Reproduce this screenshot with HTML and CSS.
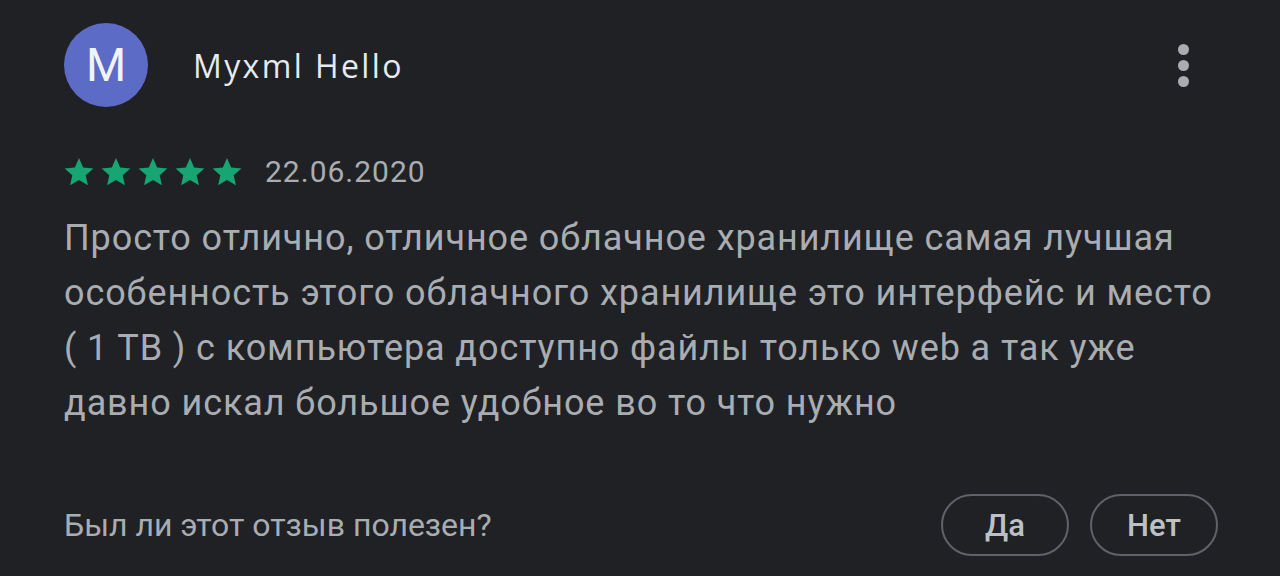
FILE: index.html
```html
<!DOCTYPE html>
<html lang="ru">
<head>
  <meta charset="UTF-8">
  <title>Отзыв</title>
  <link rel="stylesheet" href="styles.css">
</head>
<body>
  <div class="review">
    <div class="header">
      <div class="avatar">M</div>
      <div class="name">Myxml Hello</div>
      <div class="menu">
        <span class="dot"></span>
        <span class="dot"></span>
        <span class="dot"></span>
      </div>
    </div>

    <div class="meta">
      <div class="stars">
        <svg viewBox="0 0 24 24"><path d="M12 1.5l3.1 7.1 7.7.7-5.8 5.1 1.7 7.6L12 18l-6.7 4 1.7-7.6-5.8-5.1 7.7-.7z"/></svg>
        <svg viewBox="0 0 24 24"><path d="M12 1.5l3.1 7.1 7.7.7-5.8 5.1 1.7 7.6L12 18l-6.7 4 1.7-7.6-5.8-5.1 7.7-.7z"/></svg>
        <svg viewBox="0 0 24 24"><path d="M12 1.5l3.1 7.1 7.7.7-5.8 5.1 1.7 7.6L12 18l-6.7 4 1.7-7.6-5.8-5.1 7.7-.7z"/></svg>
        <svg viewBox="0 0 24 24"><path d="M12 1.5l3.1 7.1 7.7.7-5.8 5.1 1.7 7.6L12 18l-6.7 4 1.7-7.6-5.8-5.1 7.7-.7z"/></svg>
        <svg viewBox="0 0 24 24"><path d="M12 1.5l3.1 7.1 7.7.7-5.8 5.1 1.7 7.6L12 18l-6.7 4 1.7-7.6-5.8-5.1 7.7-.7z"/></svg>
      </div>
      <span class="date">22.06.2020</span>
    </div>

    <p class="text">Просто отлично, отличное облачное хранилище самая лучшая особенность этого облачного хранилище это интерфейс и место ( 1 ТВ ) с компьютера доступно файлы только web а так уже давно искал большое удобное во то что нужно</p>

    <div class="footer">
      <span class="question">Был ли этот отзыв полезен?</span>
      <div class="actions">
        <button class="pill">Да</button>
        <button class="pill">Нет</button>
      </div>
    </div>
  </div>
</body>
</html>
```

FILE: styles.css
```css
html, body {
  margin: 0;
  height: 100%;
}

body {
  background-color: #202124;
  font-family: Roboto, "Liberation Sans", sans-serif;
  color: #a9adb2;
}

.review {
  padding: 23px 62px 0 64px;
}

.header {
  display: flex;
  align-items: center;
}

.avatar {
  width: 84px;
  height: 84px;
  border-radius: 50%;
  background-color: #5c6bc6;
  color: #f1f3f4;
  font-size: 46px;
  display: flex;
  align-items: center;
  justify-content: center;
  flex-shrink: 0;
}

.name {
  margin-left: 45px;
  font-family: "Open Sans", Roboto, sans-serif;
  font-size: 32px;
  letter-spacing: 2.4px;
  color: #e8eaed;
  flex: 1;
}

.menu {
  display: flex;
  flex-direction: column;
  gap: 5px;
  margin-right: 29px;
}

.dot {
  width: 11px;
  height: 11px;
  border-radius: 50%;
  background-color: #a9acb0;
}

.meta {
  display: flex;
  align-items: center;
  margin-top: 47px;
}

.stars {
  display: flex;
  gap: 5px;
  margin-left: -1px;
}

.stars svg {
  width: 32px;
  height: 32px;
  fill: #17a673;
}

.date {
  margin-left: 22px;
  font-size: 30px;
  letter-spacing: 1px;
  color: #a9adb2;
}

.text {
  margin: 22px 0 0;
  max-width: 1162px;
  font-size: 36px;
  letter-spacing: 0.9px;
  line-height: 55px;
  color: #a9adb2;
}

.footer {
  display: flex;
  align-items: center;
  justify-content: space-between;
  margin-top: 63px;
}

.question {
  font-size: 32px;
  color: #a9adb2;
}

.actions {
  display: flex;
  gap: 21px;
}

.pill {
  width: 128px;
  height: 62px;
  border: 2px solid #5f6368;
  border-radius: 31px;
  background: transparent;
  color: #bdc1c6;
  font-family: Roboto, sans-serif;
  font-size: 31px;
  font-weight: 500;
}
```
